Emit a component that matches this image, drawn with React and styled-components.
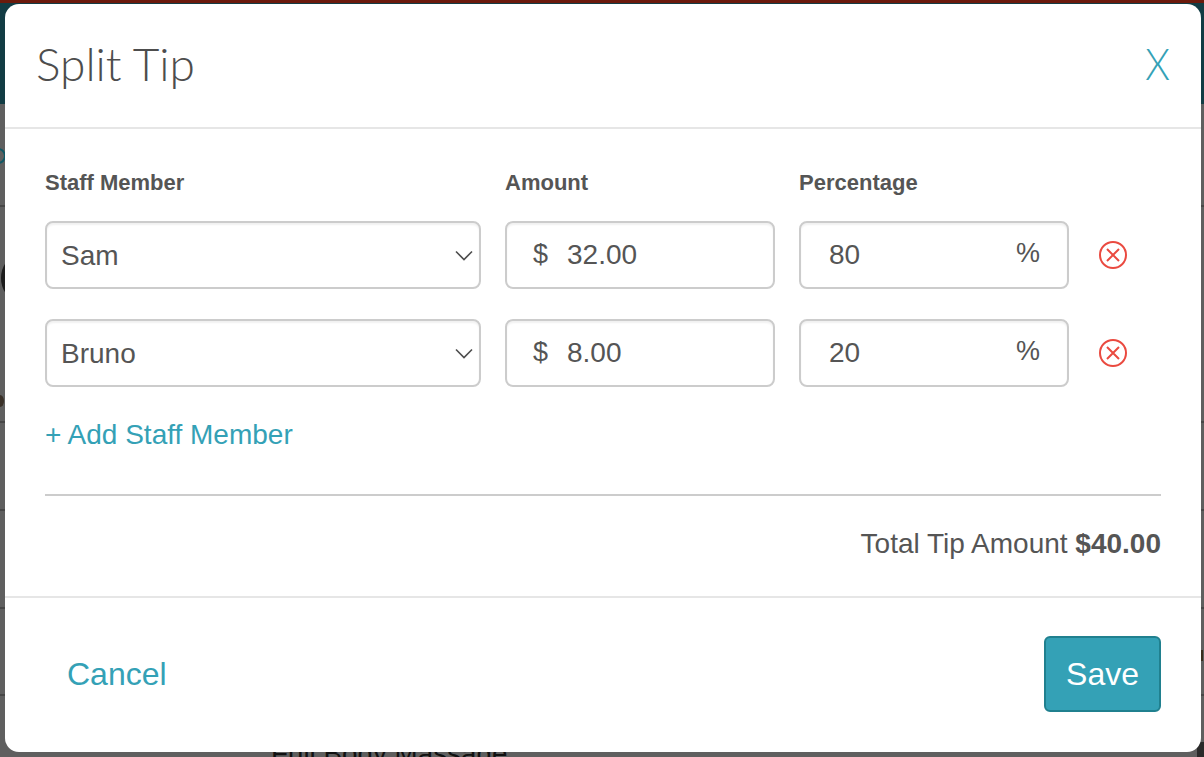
import React from 'react';
import styled, { createGlobalStyle } from 'styled-components';

const Global = createGlobalStyle`
  html, body { margin: 0; padding: 0; background: #5f5f5f; overflow: hidden; }
  * { box-sizing: border-box; }
`;

const line = (y) => `linear-gradient(#474747, #474747) 0 ${y}px / 100% 2px no-repeat`;

const Backdrop = styled.div`
  position: relative;
  width: 1204px;
  height: 757px;
  overflow: hidden;
  padding: 4px 3px 5px 5px;
  background:
    ${line(205)}, ${line(421)}, ${line(509)}, ${line(607)}, ${line(694)},
    linear-gradient(#6b1a0c 0 3px, #123c44 3px 104px, #5f5f5f 104px);
`;

const Mark = styled.i`
  position: absolute;
  left: ${(p) => p.$x}px;
  top: ${(p) => p.$y}px;
  width: ${(p) => p.$w}px;
  height: ${(p) => p.$h}px;
  border-radius: ${(p) => p.$r || '50%'};
  background: ${(p) => p.$fill || 'transparent'};
  border-left: ${(p) => p.$edge || 'none'};
`;

const Ring = styled.i`
  position: absolute;
  left: -10px;
  top: 148px;
  width: 16px;
  height: 16px;
  border: 2px solid #0f5865;
  border-radius: 50%;
`;

const BehindText = styled.div`
  position: absolute;
  left: 271px;
  top: 738px;
  font: 27.8px/32px "Liberation Sans", Arial, sans-serif;
  color: #111;
`;

const Modal = styled.div`
  position: relative;
  width: 1196px;
  height: 748px;
  background: #fff;
  border-radius: 14px;
  display: flex;
  flex-direction: column;
  font-family: "Liberation Sans", Arial, sans-serif;
  color: #555;
`;

const Header = styled.header`
  height: 125px;
  flex: none;
  display: flex;
  align-items: center;
  justify-content: space-between;
  padding: 0 31px 4px 31px;
  border-bottom: 2px solid #e6e6e6;
`;

const Title = styled.h1`
  margin: 0;
  font: 300 46px/50px Lato, sans-serif;
  color: #4d4d4d;
`;

const Close = styled.a`
  display: inline-block;
  font: 300 43px/50px Lato, sans-serif;
  color: #34a1b6;
  transform: scaleX(0.92);
  transform-origin: right center;
`;

const Body = styled.div`
  flex: none;
  height: 469px;
  padding: 42px 40px 0;
  border-bottom: 2px solid #e6e6e6;
`;

const Grid = styled.div`
  display: grid;
  grid-template-columns: 436px 270px 270px 60px;
  column-gap: 24px;
  row-gap: 30px;
  align-items: center;
`;

const Label = styled.div`
  font-size: 22px;
  font-weight: 700;
  line-height: 24px;
  margin-bottom: -4px;
`;

const Field = styled.div`
  height: 68px;
  border: 2px solid #ccc;
  border-radius: 8px;
  box-shadow: inset 0 2px 2px rgba(0, 0, 0, 0.06);
  display: flex;
  align-items: center;
  font-size: 28px;
`;

const SelectField = styled(Field)`
  padding: 0 6px 0 14px;
  justify-content: space-between;
`;

const SelectText = styled.span`
  position: relative;
  top: 1px;
`;

const MoneyField = styled(Field)`
  padding: 0 0 0 26px;
`;

const Unit = styled.span`
  width: 34px;
  font-size: 27px;
  position: relative;
  top: -1px;
`;

const PercentField = styled(Field)`
  padding: 0 27px 0 28px;
  justify-content: space-between;
`;

const PercentSign = styled.span`
  font-size: 27px;
  position: relative;
  top: -2px;
`;

const Remove = styled.button`
  border: 0;
  padding: 0;
  margin-left: 6px;
  background: none;
  width: 28px;
  height: 28px;
  display: block;
`;

const AddLink = styled.a`
  display: block;
  margin-top: 30px;
  font-size: 28px;
  line-height: 36px;
  color: #34a1b6;
`;

const Divider = styled.hr`
  margin: 41px 0 0;
  border: 0;
  border-top: 2px solid #ccc;
`;

const Total = styled.div`
  margin-top: 30px;
  text-align: right;
  font-size: 28px;
  line-height: 36px;
`;

const Footer = styled.footer`
  flex: 1;
  display: flex;
  align-items: center;
  justify-content: space-between;
  padding: 0 40px 3px 62px;
`;

const Cancel = styled.a`
  font-size: 32px;
  padding-top: 2px;
  color: #34a1b6;
`;

const Save = styled.button`
  width: 117px;
  height: 76px;
  padding: 2px 0 0;
  border: 2px solid #20808f;
  border-radius: 6px;
  background: #34a1b6;
  color: #fff;
  font: 32px "Liberation Sans", Arial, sans-serif;
`;

const Chevron = () => (
  <svg width="18" height="11" viewBox="0 0 18 11" fill="none" stroke="#4d4d4d" strokeWidth="1.6">
    <path d="M1 1.500l8 8 8-8" />
  </svg>
);

const RemoveIcon = () => (
  <svg width="28" height="28" viewBox="0 0 28 28" fill="none" stroke="#ea4a40" strokeWidth="2">
    <circle cx="14" cy="14" r="13" />
    <path d="M8 8l12 12M20 8L8 20" />
  </svg>
);

const rows = [
  { name: 'Sam', amount: '32.00', pct: '80' },
  { name: 'Bruno', amount: '8.00', pct: '20' },
];

export default function App() {
  return (
    <>
      <Global />
      <Backdrop>
        <Ring />
        <Mark $x={1} $y={257} $w={30} $h={42} $edge="4px solid #1c1c1c" />
        <Mark $x={-4} $y={395} $w={8} $h={12} $fill="#3a3128" />
        <Mark $x={1201} $y={650} $w={2} $h={11} $r="0" $fill="#3a2c1c" />
        <Mark $x={1197} $y={742} $w={7} $h={15} $r="0" $fill="#2a2a2a" />
        <BehindText>Full Body Massage</BehindText>
        <Modal>
          <Header>
            <Title>Split Tip</Title>
            <Close>X</Close>
          </Header>
          <Body>
            <Grid>
              <Label>Staff Member</Label>
              <Label>Amount</Label>
              <Label>Percentage</Label>
              <span />
              {rows.map((r) => (
                <React.Fragment key={r.name}>
                  <SelectField><SelectText>{r.name}</SelectText><Chevron /></SelectField>
                  <MoneyField><Unit>$</Unit>{r.amount}</MoneyField>
                  <PercentField>{r.pct}<PercentSign>%</PercentSign></PercentField>
                  <Remove aria-label="Remove"><RemoveIcon /></Remove>
                </React.Fragment>
              ))}
            </Grid>
            <AddLink>+ Add Staff Member</AddLink>
            <Divider />
            <Total>Total Tip Amount <b>$40.00</b></Total>
          </Body>
          <Footer>
            <Cancel>Cancel</Cancel>
            <Save>Save</Save>
          </Footer>
        </Modal>
      </Backdrop>
    </>
  );
}
